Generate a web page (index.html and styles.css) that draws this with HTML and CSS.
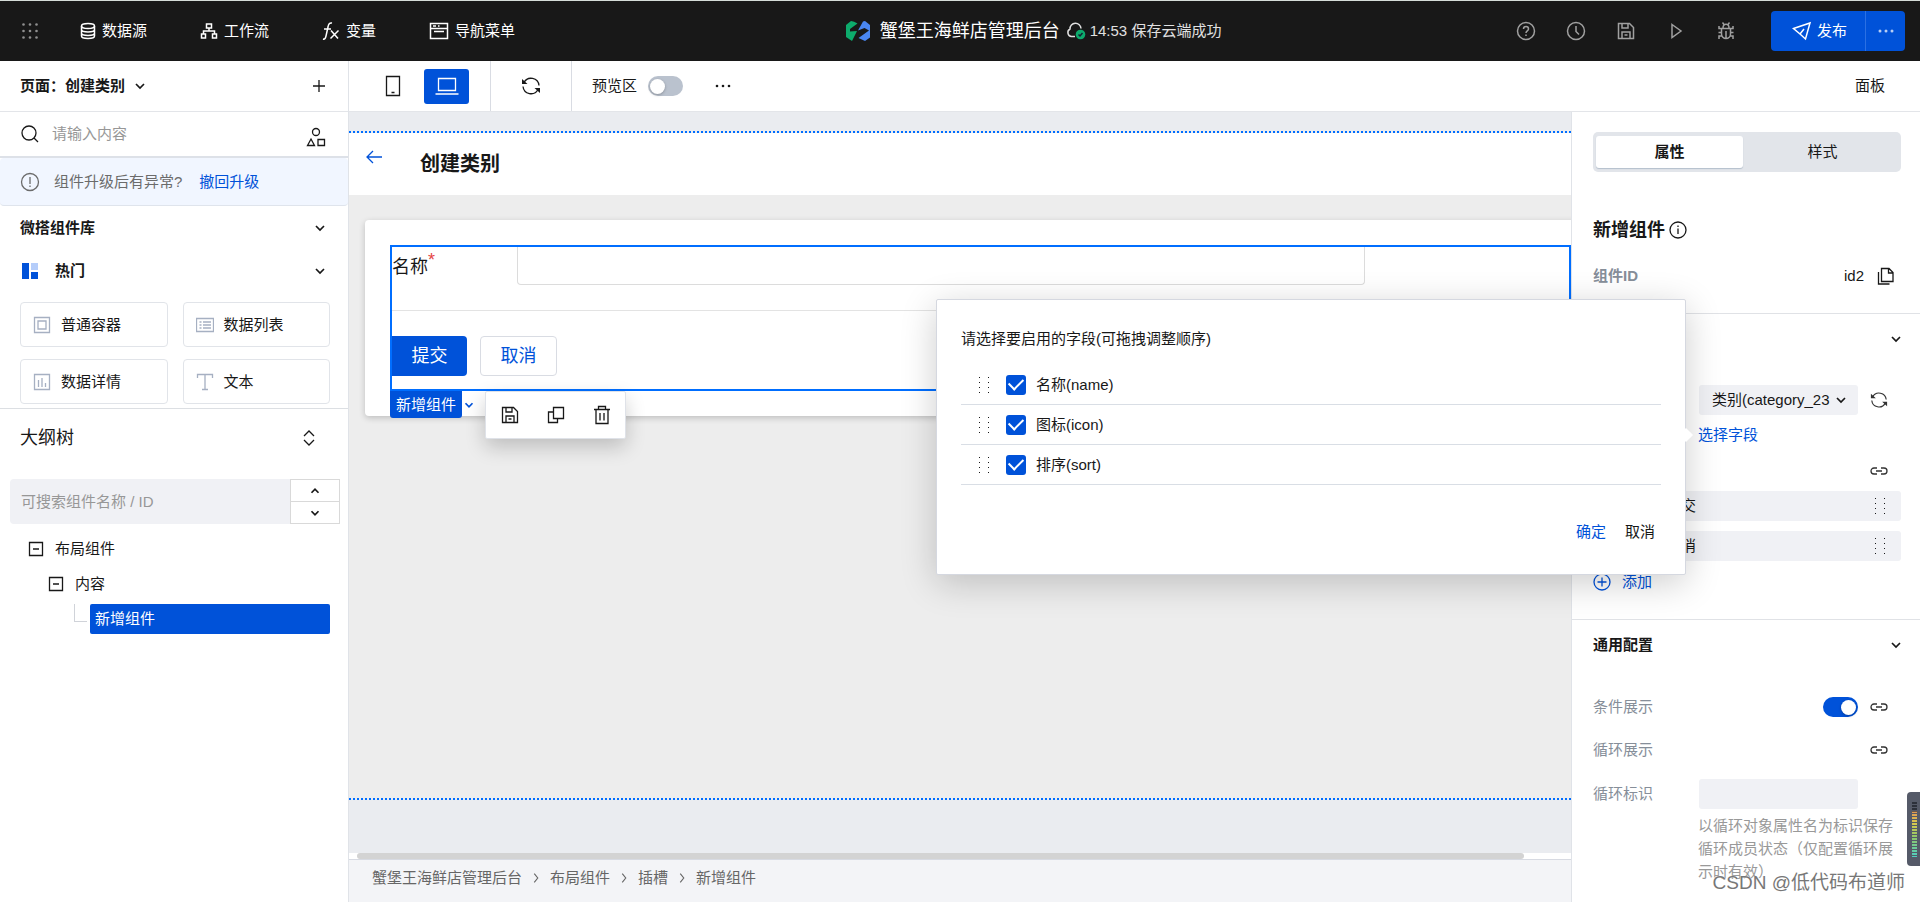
FILE: index.html
```html
<!DOCTYPE html>
<html lang="zh-CN">
<head>
<meta charset="utf-8">
<title>蟹堡王海鲜店管理后台</title>
<link rel="stylesheet" href="styles.css">
</head>
<body>
<svg class="sprite" aria-hidden="true">
  <symbol id="down" viewBox="0 0 16 16"><path d="M4 6l4 4 4-4"/></symbol>
  <symbol id="up" viewBox="0 0 16 16"><path d="M4 10l4-4 4 4"/></symbol>
  <symbol id="right" viewBox="0 0 16 16"><path d="M6 3l4 5-4 5"/></symbol>
  <symbol id="link" viewBox="0 0 18 18"><path d="M7 6H4a3 3 0 0 0 0 6h3M11 6h3a3 3 0 0 1 0 6h-3M6 9h6"/></symbol>
  <symbol id="refresh" viewBox="0 0 20 20"><path d="M3 6.500a8 8 0 0 1 15 3M17 13.500a8 8 0 0 1-15-3"/><path d="M1 3v5h5.500zM19 17v-5h-5.500z" fill="currentColor" stroke="none"/></symbol>
  <symbol id="grip" viewBox="0 0 12 18"><path d="M1 1.500h1M10 1.500h1M1 6.500h1M10 6.500h1M1 11.500h1M10 11.500h1M1 16.500h1M10 16.500h1"/></symbol>
  <symbol id="minus" viewBox="0 0 16 16"><path d="M1.500 1.500h13v13h-13zM5 8h6"/></symbol>
  <symbol id="save" viewBox="0 0 20 20"><path d="M2.500 2.500h11l4 4v11h-15zM6 2.500V7h6V2.500M6 17.500V11h8v6.500M8.500 14h3"/></symbol>
</svg>

<header class="topbar">
  <button class="icon-btn apps" aria-label="应用">
    <svg width="18" height="18" viewBox="0 0 18 18"><g fill="#8f8f8f" stroke="none"><circle cx="2.500" cy="2.500" r="1.300"/><circle cx="9" cy="2.500" r="1.300"/><circle cx="15.500" cy="2.500" r="1.300"/><circle cx="2.500" cy="9" r="1.300"/><circle cx="9" cy="9" r="1.300"/><circle cx="15.500" cy="9" r="1.300"/><circle cx="2.500" cy="15.500" r="1.300"/><circle cx="9" cy="15.500" r="1.300"/><circle cx="15.500" cy="15.500" r="1.300"/></g></svg>
  </button>
  <nav class="topnav">
    <a href="#"><svg width="16" height="18" viewBox="0 0 16 18"><ellipse cx="8" cy="4" rx="6.500" ry="2.500"/><path d="M1.500 4v10c0 3.300 13 3.300 13 0V4M1.500 7.500c0 3.300 13 3.300 13 0M1.500 11c0 3.300 13 3.300 13 0"/></svg>数据源</a>
    <a href="#"><svg width="18" height="18" viewBox="0 0 18 18"><path d="M6.500 2h5v4h-5zM1.500 12h4v4h-4zM12.500 12h4v4h-4zM9 6v3M3.500 12V9h11v3"/></svg>工作流</a>
    <a href="#"><svg width="18" height="20" viewBox="0 0 18 20"><path d="M10 2C7.500 1.500 6.500 3 6 6L4 15c-.5 2.500-1.500 3.500-3 3M2 8h7M9 9.500l7 8M16.500 9.500l-8 8"/></svg>变量</a>
    <a href="#"><svg width="20" height="18" viewBox="0 0 20 18"><path d="M1.500 1.500h17v15h-17zM1.500 6.500h17M4 4h3M9 4h1.500M5 9.500h10"/></svg>导航菜单</a>
  </nav>
  <div class="project">
    <svg class="plain" width="24" height="20" viewBox="0 0 24 20"><path fill="#0dab6c" d="M0 4l5-4q3 0 6.500 2.500L4 8v2.500l7-.5-5 10-6-4z"/><path fill="#4a86f0" d="M24 4l-5-4-2 .5-5 9L18.500 7 23 9.500 12.500 17l6.500 3 5-3.500z"/></svg>
    <h1>蟹堡王海鲜店管理后台</h1>
    <svg width="20" height="18" viewBox="0 0 20 18"><path d="M9 14.500H5.500A4 4 0 0 1 4 7a5.500 5.500 0 0 1 11-.5"/><circle cx="14.500" cy="12.500" r="4.800" fill="#0dab6c" stroke="none"/><path d="M12.500 12.500l1.500 1.500 2.500-3" stroke="#123"/></svg>
    <span>14:53 保存云端成功</span>
  </div>
  <div class="tools">
    <button class="icon-btn" aria-label="帮助"><svg width="20" height="20" viewBox="0 0 20 20"><circle cx="10" cy="10" r="8.500"/><path d="M7.500 8c0-3.300 5-3.300 5 0 0 2-2.500 1.800-2.500 4M10 13.500v1.500"/></svg></button>
    <button class="icon-btn" aria-label="历史"><svg width="20" height="20" viewBox="0 0 20 20"><circle cx="10" cy="10" r="8.500"/><path d="M10 5v5.500l3 3"/></svg></button>
    <button class="icon-btn" aria-label="保存"><svg width="20" height="20"><use href="#save"/></svg></button>
    <button class="icon-btn" aria-label="运行"><svg width="20" height="20" viewBox="0 0 20 20"><path d="M6 3.500l9 6.500-9 6.500z"/></svg></button>
    <button class="icon-btn" aria-label="调试"><svg width="18" height="20" viewBox="0 0 18 20"><path d="M4.500 7.500h9V13a4.500 4.500 0 0 1-9 0zM6 7c0-5 6-5 6 0M9 10v7.500M1.500 11.500h3M13.500 11.500h3M2 5v2.500h2.500M16 5v2.500h-2.500M2 18v-3h2.500M16 18v-3h-2.500M5.500 1.500L7 3.500M12.500 1.500L11 3.500"/></svg></button>
  </div>
  <div class="publish">
    <button class="publish-main"><svg width="20" height="20" viewBox="0 0 20 20"><path d="M1.500 7.500L18 2l-4.500 16-5.500-5zM8 13l4-5"/></svg>发布</button>
    <button class="publish-more" aria-label="更多"><svg width="18" height="4" viewBox="0 0 18 4"><g fill="currentColor" stroke="none"><circle cx="3" cy="2" r="1.500"/><circle cx="9" cy="2" r="1.500"/><circle cx="15" cy="2" r="1.500"/></g></svg></button>
  </div>
</header>

<main class="workspace">
  <aside class="left">
    <div class="page-head">
      <button class="page-select">页面：创建类别<svg width="16" height="16"><use href="#down"/></svg></button>
      <button class="icon-btn" aria-label="新建"><svg width="16" height="16" viewBox="0 0 16 16"><path d="M8 2v12M2 8h12"/></svg></button>
    </div>
    <div class="search">
      <svg width="20" height="20" viewBox="0 0 20 20"><circle cx="9" cy="9" r="7"/><path d="M14 14l4 4"/></svg>
      <input type="text" placeholder="请输入内容" aria-label="搜索组件">
      <button class="icon-btn" aria-label="分类"><svg width="20" height="20" viewBox="0 0 20 20"><circle cx="10" cy="5" r="3.500"/><path d="M5 12l3.500 6.500h-7zM12 12.500h6.500v6H12z"/></svg></button>
    </div>
    <div class="notice">
      <svg width="20" height="20" viewBox="0 0 20 20"><circle cx="10" cy="10" r="8.500"/><path d="M10 5v7M10 13.500V15"/></svg>
      <span>组件升级后有异常?</span><a href="#">撤回升级</a>
    </div>
    <section class="library">
      <h2>微搭组件库<svg width="16" height="16"><use href="#down"/></svg></h2>
      <h3><svg class="plain" width="16" height="16" viewBox="0 0 16 16"><path fill="#0052d9" d="M0 0h7v16H0zM9 9h7v7H9z"/><path fill="#b5cdfa" d="M9 0h7v7H9z"/></svg><span>热门</span><svg width="16" height="16"><use href="#down"/></svg></h3>
      <div class="cards">
        <button><svg width="18" height="18" viewBox="0 0 18 18"><path d="M1.500 1.500h15v15h-15zM5 5h8v8H5z"/></svg>普通容器</button>
        <button><svg width="18" height="18" viewBox="0 0 18 18"><path d="M.5 2.500h17v13H.5zM3.500 6h2M7 6h8M3.500 9h2M7 9h8M3.500 12h2M7 12h8"/></svg>数据列表</button>
        <button><svg width="18" height="18" viewBox="0 0 18 18"><path d="M1.500 1.500h15v15h-15zM5.500 7v7M9 5v9M12.500 10v4"/></svg>数据详情</button>
        <button><svg width="18" height="18" viewBox="0 0 18 18"><path d="M1.500 5V1.500h15V5M9 1.500v15M6 16.500h6"/></svg>文本</button>
      </div>
    </section>
    <section class="outline">
      <h2>大纲树<svg width="16" height="20" viewBox="0 0 16 20"><path d="M3 8l5-5 5 5M3 12l5 5 5-5"/></svg></h2>
      <div class="tree-search">
        <input type="text" placeholder="可搜索组件名称 / ID" aria-label="搜索大纲">
        <div class="spin">
          <button aria-label="上一个"><svg width="14" height="14"><use href="#up"/></svg></button>
          <button aria-label="下一个"><svg width="14" height="14"><use href="#down"/></svg></button>
        </div>
      </div>
      <ul class="tree">
        <li class="l1"><svg width="16" height="16"><use href="#minus"/></svg>布局组件</li>
        <li class="l2"><svg width="16" height="16"><use href="#minus"/></svg>内容</li>
        <li class="l3"><i></i><button>新增组件</button></li>
      </ul>
    </section>
  </aside>

  <div class="stage">
    <div class="toolbar">
      <div class="devices">
        <button aria-label="手机"><svg width="16" height="22" viewBox="0 0 16 22"><path d="M1.500 1.500h13v19h-13zM6.500 17.500h3"/></svg></button>
        <button class="on" aria-label="桌面"><svg width="24" height="20" viewBox="0 0 24 20"><path d="M3.500 2.500h17v12h-17zM.5 18h23"/></svg></button>
      </div>
      <button class="reload" aria-label="刷新"><svg width="20" height="20"><use href="#refresh"/></svg></button>
      <label class="preview">预览区<input class="switch" type="checkbox"></label>
      <button class="icon-btn" aria-label="更多"><svg width="18" height="4" viewBox="0 0 18 4"><g fill="currentColor" stroke="none"><circle cx="3" cy="2" r="1.300"/><circle cx="9" cy="2" r="1.300"/><circle cx="15" cy="2" r="1.300"/></g></svg></button>
      <button class="panel-btn">面板</button>
    </div>
    <div class="split">
      <div class="center">
        <div class="canvas">
          <div class="page">
            <div class="page-title">
              <button class="icon-btn" aria-label="返回"><svg width="16" height="14" viewBox="0 0 16 14"><path d="M16 7H1M7 1L1 7l6 6"/></svg></button>
              <h2>创建类别</h2>
            </div>
            <div class="page-body">
              <div class="card">
                <form class="selected">
                  <div class="field"><label for="name">名称<sup>*</sup></label><input id="name" type="text"></div>
                  <div class="actions"><button type="button" class="primary">提交</button><button type="button">取消</button></div>
                  <div class="tag"><span>新增组件</span><svg width="14" height="14"><use href="#down"/></svg></div>
                  <div class="float">
                    <button type="button" aria-label="保存"><svg width="20" height="20"><use href="#save"/></svg></button>
                    <button type="button" aria-label="复制"><svg width="18" height="18" viewBox="0 0 18 18"><path d="M6.500 1.500h10v11h-10zM6.500 6h-5v10.500h9v-4"/></svg></button>
                    <button type="button" aria-label="删除"><svg width="18" height="20" viewBox="0 0 18 20"><path d="M1 4.500h16M5.500 4.500v-3h7v3M3 4.500v14h12v-14M7 8v7.500M11 8v7.500"/></svg></button>
                  </div>
                </form>
              </div>
            </div>
          </div>
        </div>
        <div class="scroll"><div class="thumb"></div></div>
        <nav class="crumbs">
          <a href="#">蟹堡王海鲜店管理后台</a><svg width="14" height="14"><use href="#right"/></svg>
          <a href="#">布局组件</a><svg width="14" height="14"><use href="#right"/></svg>
          <a href="#">插槽</a><svg width="14" height="14"><use href="#right"/></svg>
          <a href="#">新增组件</a>
        </nav>
      </div>

      <aside class="props">
        <div class="block">
          <div class="tabs"><button class="on">属性</button><button>样式</button></div>
          <h2>新增组件<svg width="18" height="18" viewBox="0 0 18 18"><circle cx="9" cy="9" r="8"/><path d="M9 7.500v5.500M9 4.500V6"/></svg></h2>
          <div class="id-row"><b>组件ID</b><span>id2</span><button class="icon-btn" aria-label="复制ID"><svg width="18" height="18" viewBox="0 0 18 18"><path d="M4.500 1.500h7.500l4 4v9h-11.500zM11.500 1.500V6h4.500M1.500 5v12h11"/></svg></button></div>
        </div>
        <div class="block data">
          <div class="fold"><svg width="16" height="16"><use href="#down"/></svg></div>
          <div class="row">
            <div class="select"><select aria-label="数据源"><option>类别(category_23</option></select><svg width="16" height="16"><use href="#down"/></svg></div>
            <button class="icon-btn" aria-label="刷新"><svg width="18" height="18"><use href="#refresh"/></svg></button>
          </div>
          <div class="row pick"><a href="#">选择字段</a></div>
          <div class="row"><button class="icon-btn" aria-label="绑定"><svg width="18" height="18"><use href="#link"/></svg></button></div>
          <ul class="items">
            <li>提交<svg class="crisp" width="12" height="18"><use href="#grip"/></svg></li>
            <li>取消<svg class="crisp" width="12" height="18"><use href="#grip"/></svg></li>
          </ul>
          <button class="add"><svg width="18" height="18" viewBox="0 0 18 18"><circle cx="9" cy="9" r="8"/><path d="M9 4.500v9M4.500 9h9"/></svg>添加</button>
        </div>
        <div class="block common">
          <h3>通用配置<svg width="16" height="16"><use href="#down"/></svg></h3>
          <div class="row"><label for="cond">条件展示</label><input id="cond" class="switch" type="checkbox" checked><button class="icon-btn" aria-label="绑定条件"><svg width="18" height="18"><use href="#link"/></svg></button></div>
          <div class="row"><span>循环展示</span><button class="icon-btn" aria-label="绑定循环"><svg width="18" height="18"><use href="#link"/></svg></button></div>
          <div class="row key"><label for="loop">循环标识</label><input id="loop" type="text"></div>
          <p>以循环对象属性名为标识保存循环成员状态（仅配置循环展示时有效）</p>
        </div>

        <div class="popover" role="dialog" aria-label="字段选择">
          <h4>请选择要启用的字段(可拖拽调整顺序)</h4>
          <ul>
            <li><svg class="crisp" width="12" height="18"><use href="#grip"/></svg><label><input type="checkbox" checked>名称(name)</label></li>
            <li><svg class="crisp" width="12" height="18"><use href="#grip"/></svg><label><input type="checkbox" checked>图标(icon)</label></li>
            <li><svg class="crisp" width="12" height="18"><use href="#grip"/></svg><label><input type="checkbox" checked>排序(sort)</label></li>
          </ul>
          <div class="confirm"><button class="ok">确定</button><button>取消</button></div>
        </div>
      </aside>
    </div>
  </div>
</main>
<div class="meter"><i></i></div>
<div class="watermark">CSDN @低代码布道师</div>
</body>
</html>
```
FILE: styles.css
```css
* { box-sizing: border-box; }
body {
  margin: 0;
  min-height: 100vh;
  display: flex;
  flex-direction: column;
  position: relative;
  overflow: hidden;
  background: #fff;
  color: #181818;
  font: 15px/24px "Liberation Sans", "Noto Sans CJK SC", sans-serif;
}
h1, h2, h3, h4, ul, p { margin: 0; padding: 0; }
ul { list-style: none; }
button, input, select { font: inherit; color: inherit; border: 0; background: none; padding: 0; margin: 0; }
a { color: #0052d9; text-decoration: none; }
svg { flex: none; fill: none; stroke: currentColor; stroke-width: 1.3; }
svg.plain { stroke: none; }
svg.crisp { shape-rendering: crispEdges; stroke-width: 1; }
.sprite { display: none; }
.icon-btn { display: flex; align-items: center; justify-content: center; }

.topbar {
  display: flex;
  align-items: center;
  height: 61px;
  padding: 0 15px 0 21px;
  border-top: 1px solid #d5dcd8;
  background: #181818;
  color: #fff;
}
.topbar svg { stroke-width: 1.5; }
.topbar svg.plain { stroke: none; }
.topnav { display: flex; gap: 53px; margin-left: 41px; }
.topnav a { display: flex; align-items: center; gap: 6px; color: #fff; }
.project { display: flex; align-items: center; margin: 0 auto; padding-left: 36px; color: #e0e0e0; }
.project h1 { margin: 0 6px 0 10px; font-size: 18px; font-weight: 400; color: #fff; }
.project span { margin-left: 4px; }
.tools { display: flex; gap: 30px; color: #a0a0a0; }
.tools .icon-btn { width: 20px; height: 20px; }
.publish { display: flex; height: 40px; margin-left: 35px; border-radius: 4px; background: #0052d9; }
.publish-main { display: flex; align-items: center; justify-content: center; gap: 5px; width: 94px; padding-left: 3px; }
.publish-more { width: 40px; border-left: 1px solid #2b70e3; color: #b8cff5; display: flex; align-items: center; justify-content: center; }

.workspace { flex: 1; display: flex; }
.left { width: 349px; flex: none; border-right: 1px solid #e0e3e8; }
.page-head { display: flex; align-items: center; justify-content: space-between; height: 51px; padding: 0 21px 0 20px; border-bottom: 1px solid #e3e5e9; }
.page-select { display: flex; align-items: center; gap: 7px; font-weight: 700; }
.search { display: flex; align-items: center; height: 46px; padding: 0 22px 0 20px; border-bottom: 2px solid #dde1e8; }
.search input { flex: 1; min-width: 0; margin-left: 12px; outline: 0; }
.search .icon-btn { padding-top: 5px; }
::placeholder { color: #979797; opacity: 1; }
.notice { display: flex; align-items: center; height: 48px; padding-left: 20px; border-bottom: 1px solid #dfe4ec; border-radius: 4px; background: #f1f6ff; color: #6b6b6b; }
.notice span { margin: 0 17px 0 14px; }
.library { padding: 0 18px 4px 20px; border-bottom: 1px solid #dcdfe3; }
.library h2, .library h3 { display: flex; align-items: center; height: 43px; padding-right: 2px; font-size: 15px; justify-content: space-between; }
.library h2 svg, .library h3 svg:last-child, .page-select svg { stroke-width: 1.7; }
.library h3 span { flex: 1; margin-left: 17px; }
.library h3 .plain { margin-left: 2px; }
.cards { display: grid; grid-template-columns: 1fr 1fr; gap: 12px 15px; padding-top: 10px; }
.cards button { display: flex; align-items: center; gap: 10px; height: 45px; padding-left: 12px; border: 1px solid #e1e4e9; border-radius: 4px; }
.cards svg { color: #a6b0c2; }
.outline h2 { display: flex; align-items: center; justify-content: space-between; height: 58px; padding: 0 31px 0 20px; font-size: 18px; font-weight: 400; }
.tree-search { display: flex; height: 45px; margin: 12px 8px 0 10px; }
.tree-search input { flex: 1; min-width: 0; padding-left: 11px; border-radius: 4px 0 0 4px; background: #f0f1f5; }
.spin { display: grid; width: 50px; border: 1px solid #d9d9d9; }
.spin button { display: flex; align-items: center; justify-content: center; }
.spin button + button { border-top: 1px solid #d9d9d9; }
.spin svg { stroke-width: 2; }
.tree { padding-top: 7px; }
.tree li { display: flex; align-items: center; height: 35px; gap: 11px; }
.tree .l1 { padding-left: 28px; }
.tree .l2 { padding-left: 48px; }
.tree .l3 { padding: 0 18px 0 74px; gap: 3px; }
.l3 i { width: 13px; height: 18px; margin-bottom: 12px; border: 1px solid #d0d3d9; border-width: 0 0 1px 1px; }
.l3 button { flex: 1; height: 30px; padding-left: 5px; text-align: left; border-radius: 2px; background: #0052d9; color: #fff; }

.stage { flex: 1; min-width: 0; display: flex; flex-direction: column; }
.toolbar { display: flex; align-items: center; height: 51px; padding-right: 35px; border-bottom: 1px solid #e3e5e9; }
.devices { display: flex; align-items: center; gap: 9px; height: 50px; padding: 0 21px; border-right: 1px solid #d9dce3; }
.devices button { display: flex; align-items: center; justify-content: center; width: 45px; height: 35px; border-radius: 3px; }
.devices .on { background: #0052d9; color: #fff; }
.reload { display: flex; align-items: center; justify-content: center; width: 81px; height: 50px; border-right: 1px solid #d9dce3; }
.preview { display: flex; align-items: center; gap: 11px; margin: 0 31px 0 20px; }
.switch { appearance: none; display: flex; align-items: center; width: 35px; height: 20px; padding: 0 2px; border-radius: 10px; background: #bac2ce; }
.switch::before { content: ""; width: 15px; height: 15px; border-radius: 50%; background: #fff; box-shadow: 0 1px 3px #0004; }
.switch:checked { justify-content: flex-end; background: #0052d9; }
.panel-btn { margin-left: auto; }

.split { flex: 1; display: flex; }
.center { flex: 1; min-width: 0; display: flex; flex-direction: column; overflow: hidden; }
.canvas { flex: 1; display: flex; padding: 19px 0 53px; background: #eaecf0; overflow: hidden; }
.page { flex: 1; min-width: 0; display: flex; flex-direction: column; border: 2px dotted #006eff; border-width: 2px 0; background: #ededed; }
.page-title { display: flex; height: 62px; padding: 17px 17px 0; background: #fff; }
.page-title .icon-btn { align-items: flex-start; color: #0052d9; }
.page-title h2 { margin-left: 38px; font-size: 20px; line-height: 28px; }
.page-body { flex: 1; padding: 25px 0 0 16px; }
.card { margin-right: -25px; padding: 25px; border-radius: 4px; background: #fff; box-shadow: 0 2px 6px #0003; }
.selected { position: relative; height: 146px; border: 2px solid #006eff; font-size: 18px; }
.field { display: flex; height: 64px; border-bottom: 1px solid #e3e3e3; }
.field label { width: 125px; padding-top: 6px; }
.field sup { color: #e54545; font-size: 18px; line-height: 15px; }
.field input { flex: 1; height: 38px; margin-right: 204px; padding: 0 12px; border: 1px solid #dcdcdc; border-top: 0; border-radius: 0 0 4px 4px; }
.actions { display: flex; gap: 13px; padding-top: 25px; }
.actions button { width: 77px; height: 40px; border: 1px solid #d9dce3; border-radius: 4px; color: #0052d9; }
.actions .primary { width: 75px; border: 0; border-radius: 0 4px 4px 0; background: #0052d9; color: #fff; }
.tag { position: absolute; top: calc(100% + 2px); left: -2px; display: flex; align-items: center; color: #0052d9; font-size: 15px; }
.tag span { width: 72px; line-height: 27px; text-align: center; border-radius: 0 0 3px 3px; background: #0052d9; color: #fff; }
.tag svg { stroke-width: 2; }
.float { position: absolute; top: calc(100% + 2px); left: 93px; display: flex; align-items: center; justify-content: space-around; width: 141px; height: 48px; border: 1px solid #dfe2e8; border-radius: 2px; background: #fff; box-shadow: 0 8px 20px #0003; }
.float button { display: flex; }
.scroll { height: 6px; padding: 0 47px 0 8px; background: #fff; }
.thumb { height: 6px; border-radius: 3px; background: #d3d3d3; }
.crumbs { display: flex; align-items: center; gap: 7px; height: 43px; padding: 0 23px 7px; border-top: 1px solid #d7dae2; background: #f3f4f7; color: #666; }
.crumbs a { color: #666; }

.props { position: relative; z-index: 1; width: 349px; flex: none; border-left: 1px solid #e0e3e8; background: #fff; }
.block { padding: 0 19px 0 21px; }
.block + .block { border-top: 1px solid #e0e2e6; }
.block:first-child { height: 201px; padding-top: 20px; }
.tabs { display: grid; grid-template-columns: 1fr 1fr; height: 40px; padding: 4px 3px; border-radius: 5px; background: #e2e5ea; }
.tabs button { border-radius: 3px; }
.tabs .on { margin-right: 4px; background: #fff; font-weight: 700; box-shadow: 0 1px 1px #b4bfcc; }
.props h2 { display: flex; align-items: center; gap: 4px; margin-top: 44px; font-size: 18px; line-height: 28px; }
.id-row { display: flex; align-items: center; margin-top: 20px; padding-right: 6px; }
.id-row b { flex: 1; color: #868e99; }
.id-row span { margin-right: 13px; }
.fold { display: flex; align-items: center; justify-content: flex-end; height: 50px; margin-right: -3px; }
.fold svg, .common h3 svg, .select svg { stroke-width: 1.7; }
.row { display: flex; align-items: center; justify-content: flex-end; height: 24px; margin-top: 12px; gap: 12px; padding-right: 13px; color: #868e99; }
.row .icon-btn { width: 18px; color: #333; }
.data { height: 306px; }
.data .row:nth-child(2) { height: 30px; margin-top: 21px; }
.pick.row { margin-top: 8px; padding-right: 143px; }
.select { display: flex; align-items: center; width: 159px; height: 30px; padding-right: 9px; border-radius: 3px; background: #f0f1f5; color: #181818; }
.select select { appearance: none; flex: 1; min-width: 0; padding-left: 13px; }
.items { display: grid; gap: 10px; margin-top: 8px; }
.items li { display: flex; align-items: center; justify-content: space-between; height: 30px; padding: 0 15px 0 73px; border-radius: 3px; background: #f0f1f5; }
.add { display: flex; align-items: center; gap: 11px; margin-top: 9px; color: #0052d9; }
.common h3 { display: flex; align-items: center; justify-content: space-between; height: 50px; margin-right: -3px; font-size: 15px; }
.common .row { margin-top: 19px; }
.common h3 + .row { margin-top: 25px; }
.row label, .row span { flex: 1; }
.common .key { height: 30px; margin-top: 17px; padding-right: 43px; }
.key input { width: 159px; height: 30px; padding: 0 12px; border-radius: 3px; background: #f0f1f5; }
.common p { margin: 5px 0 0 105px; line-height: 23px; color: #999; }

.popover { position: absolute; top: 187px; right: 234px; width: 750px; height: 276px; padding: 27px 24px 0; border: 1px solid #d5d8e0; border-radius: 2px; background: #fff; box-shadow: 0 8px 36px #0003; }
.popover::after { content: ""; position: absolute; top: 130px; right: -6px; width: 10px; height: 10px; background: #fff; transform: rotate(45deg); }
.popover h4 { font-size: 15px; font-weight: 400; }
.popover ul { margin-top: 14px; }
.popover li { display: flex; align-items: center; gap: 16px; height: 40px; padding-left: 17px; border-bottom: 1px solid #d9dee5; }
.popover label { display: flex; align-items: center; gap: 10px; }
.popover [type="checkbox"] { appearance: none; display: grid; place-items: center; width: 20px; height: 20px; border-radius: 3px; background: #0052d9; }
.popover [type="checkbox"]::before { content: ""; width: 12px; height: 7px; margin-bottom: 4px; border: solid #fff; border-width: 0 0 2px 2px; transform: rotate(-45deg); }
.confirm { display: flex; justify-content: flex-end; gap: 19px; margin-top: 35px; padding-right: 6px; }
.confirm .ok { color: #0052d9; }

.meter { position: absolute; z-index: 2; right: 0; top: 792px; width: 13px; height: 74px; padding: 9px 3px 9px 5px; border-radius: 4px 0 0 4px; background: #555a68; }
.meter i { display: block; height: 56px; background: repeating-linear-gradient(#555a68 0 1px, transparent 1px 3px), linear-gradient(#2c303a 0 18%, #e09a55 20%, #d8c84e 40%, #8fc76a 65%, #4fd0c0); }
.watermark { position: absolute; z-index: 2; right: 15px; bottom: 4px; font-size: 19px; line-height: 30px; color: #777; text-shadow: 0 0 1px #fff; }
```
